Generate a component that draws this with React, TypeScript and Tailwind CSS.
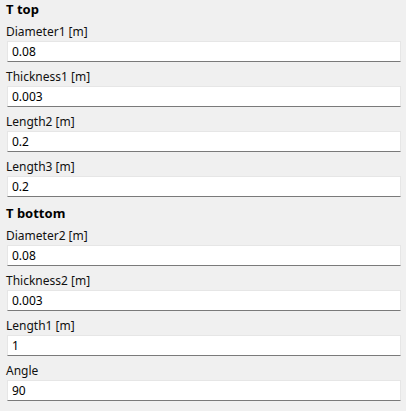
import React from 'react';

interface Field {
  label: string;
  value: string;
}

interface Group {
  title: string;
  fields: Field[];
}

const groups: Group[] = [
  {
    title: 'T top',
    fields: [
      { label: 'Diameter1 [m]', value: '0.08' },
      { label: 'Thickness1 [m]', value: '0.003' },
      { label: 'Length2 [m]', value: '0.2' },
      { label: 'Length3 [m]', value: '0.2' },
    ],
  },
  {
    title: 'T bottom',
    fields: [
      { label: 'Diameter2 [m]', value: '0.08' },
      { label: 'Thickness2 [m]', value: '0.003' },
      { label: 'Length1 [m]', value: '1' },
      { label: 'Angle', value: '90' },
    ],
  },
];

function FieldRow({ field }: { field: Field }) {
  return (
    <div className="flex flex-col mb-[5px]">
      <label className="h-[19px] leading-[19px] text-[12px] text-[#111] -ml-[1px]">{field.label}</label>
      <input
        defaultValue={field.value}
        className="h-[21px] w-full bg-white pl-[4px] text-[12px] text-black outline-none border border-[#e6e6e6] border-b-[#7a7a7a] leading-[19px]"
      />
    </div>
  );
}

export default function App() {
  return (
    <div
      className="w-[406px] h-[411px] bg-[#f0f0f0] pl-[7px] pr-[5px] overflow-hidden"
      style={{ fontFamily: '"Segoe UI", "Noto Sans", "Open Sans", sans-serif' }}
    >
      {groups.map((group, i) => (
        <div key={group.title} className={i > 0 ? 'mt-[7px]' : ''}>
          <h2 className="h-[18px] leading-[18px] text-[13px] font-bold text-black -ml-[1px]">{group.title}</h2>
          <div className="mt-[4px]">
            {group.fields.map((f) => (
              <FieldRow key={f.label} field={f} />
            ))}
          </div>
        </div>
      ))}
    </div>
  );
}
